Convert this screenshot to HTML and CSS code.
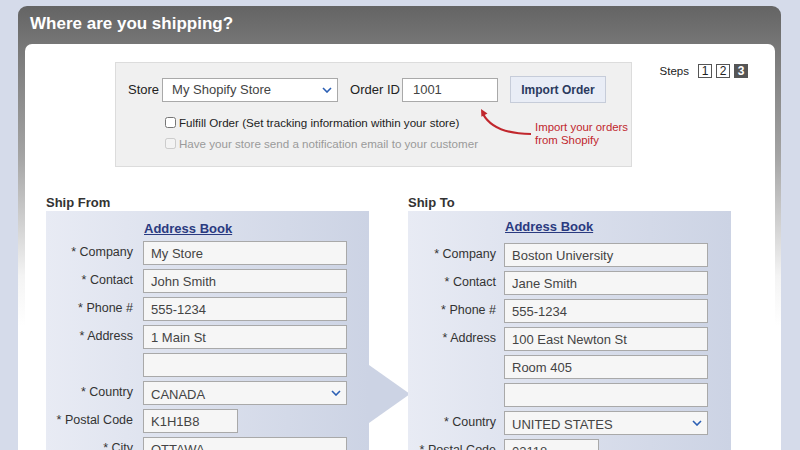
FILE: index.html
```html
<!DOCTYPE html>
<html lang="en">
<head>
  <meta charset="UTF-8" />
  <meta name="viewport" content="width=device-width, initial-scale=1.0" />
  <title>Where are you shipping?</title>
  <link rel="stylesheet" href="styles.css">
</head>
<body>

<div class="frame">
  <h1 class="title">Where are you shipping?</h1>

  <div class="sheet">
    <!-- Import from store -->
    <div class="top">
      <div class="import">
        <div class="import-row">
          <label class="lbl">Store</label>
          <div class="select-wrap store-select">
            <select class="field">
              <option>My Shopify Store</option>
            </select>
            <svg class="chev" width="10" height="6" viewBox="0 0 10 6"><path d="M1 1 L5 5 L9 1" fill="none" stroke="#2b5fb4" stroke-width="1.6"/></svg>
          </div>
          <label class="lbl order-lbl">Order ID</label>
          <input class="field order-id" type="text" value="1001">
          <button class="import-btn">Import Order</button>
        </div>
        <label class="check"><input type="checkbox"> Fulfill Order (Set tracking information within your store)</label>
        <label class="check disabled"><input type="checkbox" disabled> Have your store send a notification email to your customer</label>

        <svg class="hint-arrow" width="60" height="35" viewBox="0 0 60 35">
          <path d="M6 8 Q 17 28 54 28" fill="none" stroke="#c1272d" stroke-width="2.2"/>
          <polygon points="4,3 10.5,7.4 4.4,10.8" fill="#c1272d"/>
        </svg>
        <div class="hint">Import your orders<br>from Shopify</div>
      </div>

      <div class="steps">
        <span>Steps</span>
        <span class="step">1</span>
        <span class="step">2</span>
        <span class="step current">3</span>
      </div>
    </div>

    <!-- Addresses -->
    <div class="ship">
      <section class="party from">
        <h2>Ship From</h2>
        <div class="box">
          <div class="row"><span></span><a href="#" class="book">Address Book</a></div>
          <div class="row"><label>* Company</label><input class="field" value="My Store"></div>
          <div class="row"><label>* Contact</label><input class="field" value="John Smith"></div>
          <div class="row"><label>* Phone #</label><input class="field" value="555-1234"></div>
          <div class="row"><label>* Address</label><input class="field" value="1 Main St"></div>
          <div class="row"><label></label><input class="field" value=""></div>
          <div class="row"><label>* Country</label>
            <div class="select-wrap">
              <select class="field"><option>CANADA</option></select>
              <svg class="chev" width="10" height="6" viewBox="0 0 10 6"><path d="M1 1 L5 5 L9 1" fill="none" stroke="#2b5fb4" stroke-width="1.6"/></svg>
            </div>
          </div>
          <div class="row"><label>* Postal Code</label><input class="field short" value="K1H1B8"></div>
          <div class="row"><label>* City</label><input class="field" value="OTTAWA"></div>
        </div>
      </section>

      <section class="party to">
        <h2>Ship To</h2>
        <div class="box">
          <div class="row"><span></span><a href="#" class="book">Address Book</a></div>
          <div class="row"><label>* Company</label><input class="field" value="Boston University"></div>
          <div class="row"><label>* Contact</label><input class="field" value="Jane Smith"></div>
          <div class="row"><label>* Phone #</label><input class="field" value="555-1234"></div>
          <div class="row"><label>* Address</label><input class="field" value="100 East Newton St"></div>
          <div class="row"><label></label><input class="field" value="Room 405"></div>
          <div class="row"><label></label><input class="field" value=""></div>
          <div class="row"><label>* Country</label>
            <div class="select-wrap">
              <select class="field"><option>UNITED STATES</option></select>
              <svg class="chev" width="10" height="6" viewBox="0 0 10 6"><path d="M1 1 L5 5 L9 1" fill="none" stroke="#2b5fb4" stroke-width="1.6"/></svg>
            </div>
          </div>
          <div class="row"><label>* Postal Code</label><input class="field short" value="02118"></div>
          <div class="row"><label>* City</label><input class="field" value="BOSTON"></div>
        </div>
      </section>
    </div>
  </div>
</div>

</body>
</html>
```

FILE: styles.css
```css
body {
  margin: 0;
  background: #d5dbea;
  font-family: "Liberation Sans", Arial, sans-serif;
  color: #333;
  overflow: hidden;
}

.frame {
  margin: 6px 19px 0 18px;
  padding: 0 6px 0 7px;
  min-height: 700px;
  border-radius: 9px 9px 0 0;
  background: linear-gradient(#646464 0, #787878 42px, #a4a4a4 150px, #f4f4f4 270px, #fff 320px);
}

.title {
  margin: 0;
  height: 38px;
  padding-left: 5px;
  font-size: 17px;
  line-height: 35px;
  font-weight: bold;
  color: #fff;
}

.sheet {
  background: #fff;
  border-radius: 7px 7px 0 0;
  min-height: 660px;
  padding: 18px 0 0 21px;
}

.top {
  display: flex;
  align-items: flex-start;
}

.import {
  position: relative;
  margin-left: 69px;
  width: 503px;
  height: 103px;
  background: #f0f0f0;
  border: 1px solid #dcdcdc;
  padding: 0 0 0 12px;
  box-sizing: content-box;
}

.import-row {
  display: flex;
  align-items: center;
  height: 27px;
  margin-top: 13px;
}

.lbl {
  font-size: 13px;
  color: #222;
}

.field {
  box-sizing: border-box;
  height: 24px;
  border: 1px solid #a9a9a9;
  background: #f6f6f6;
  font-family: "Liberation Sans", Arial, sans-serif;
  font-size: 13px;
  color: #444;
  padding: 0 0 0 7px;
  margin: 0;
  outline: none;
  border-radius: 0;
}

select.field {
  -webkit-appearance: none;
  appearance: none;
  width: 100%;
  padding-top: 3px;
}

.select-wrap {
  position: relative;
  width: 204px;
  height: 24px;
}

.chev {
  position: absolute;
  right: 6px;
  top: 9px;
}

.store-select {
  width: 176px;
  margin-left: 3px;
}

.store-select select.field {
  background: #fff;
  padding-top: 0;
  padding-left: 9px;
}

.order-lbl {
  margin-left: 12px;
}

.order-id {
  width: 96px;
  margin-left: 2px;
  background: #fff;
  padding-left: 10px;
}

.import-btn {
  margin-left: 12px;
  width: 96px;
  height: 27px;
  border: 1px solid #c6ccd9;
  background: #e9edf6;
  font-family: "Liberation Sans", Arial, sans-serif;
  font-size: 12px;
  font-weight: bold;
  color: #2b3a5e;
  padding: 0;
}

.check {
  display: flex;
  align-items: center;
  margin-left: 37px;
  font-size: 11.6px;
  color: #222;
  height: 21px;
}

.check:first-of-type {
  margin-top: 9px;
}

.check input {
  width: 11px;
  height: 11px;
  margin: 0 3px 0 0;
}

.check.disabled {
  color: #9a9a9a;
}

.hint-arrow {
  position: absolute;
  left: 361px;
  top: 43px;
}

.hint {
  position: absolute;
  left: 419px;
  top: 58px;
  font-size: 11.4px;
  line-height: 13px;
  color: #c1272d;
}

.steps {
  display: flex;
  align-items: center;
  gap: 4px;
  margin-left: auto;
  margin-right: 27px;
  margin-top: 2px;
  font-size: 11.5px;
  color: #222;
}

.steps span:first-child {
  margin-right: 5px;
}

.step {
  box-sizing: border-box;
  width: 14px;
  height: 14px;
  border: 1px solid #555;
  font-size: 12px;
  line-height: 12px;
  text-align: center;
}

.step.current {
  background: #555;
  color: #fff;
  font-weight: bold;
}

.ship {
  display: flex;
  gap: 39px;
  margin-top: 28px;
}

.party h2 {
  margin: 0;
  font-size: 13px;
  line-height: 16px;
  font-weight: bold;
  color: #333;
}

.box {
  position: relative;
  width: 323px;
  height: 300px;
  background: linear-gradient(to right, #e8ebf4, #ccd3e4);
  padding-top: 9px;
  box-sizing: border-box;
}

.from .box::after {
  content: "";
  position: absolute;
  left: 323px;
  top: 154px;
  border-top: 29px solid transparent;
  border-bottom: 29px solid transparent;
  border-left: 41px solid #ccd3e4;
}

.to .box {
  padding-top: 7px;
}

.row {
  display: grid;
  grid-template-columns: 87px 204px;
  column-gap: 10px;
  align-items: center;
  margin-bottom: 4px;
}

.to .row {
  grid-template-columns: 88px 204px;
  column-gap: 8px;
}

.row label {
  font-size: 12.5px;
  color: #333;
  text-align: right;
  white-space: nowrap;
  margin-top: -3px;
}

.row .field {
  width: 204px;
}

.row .field.short {
  width: 95px;
}

.book {
  font-size: 13px;
  font-weight: bold;
  color: #2a3a80;
  line-height: 17px;
  padding-left: 1px;
}

.to .book {
  margin-bottom: 4px;
}
```
